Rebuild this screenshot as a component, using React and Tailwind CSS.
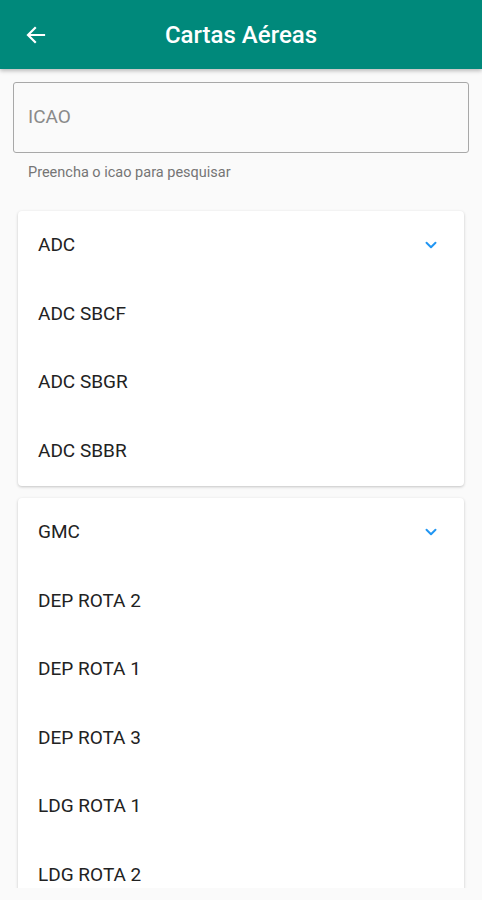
import React from "react";

const groups = [
  { title: "ADC", items: ["ADC SBCF", "ADC SBGR", "ADC SBBR"] },
  { title: "GMC", items: ["DEP ROTA 2", "DEP ROTA 1", "DEP ROTA 3", "LDG ROTA 1", "LDG ROTA 2"] },
];

function Chevron() {
  return (
    <svg width="18" height="18" viewBox="0 0 24 24" fill="none">
      <path d="M6 9l6 6 6-6" stroke="#2196f3" strokeWidth="2.6" strokeLinecap="round" strokeLinejoin="round" />
    </svg>
  );
}

export default function App() {
  return (
    <div className="h-[900px] bg-[#fafafa] overflow-hidden" style={{ fontFamily: "Roboto, 'Noto Sans', sans-serif" }}>
      <div className="h-[888px] overflow-hidden">
        {/* header */}
        <div className="relative h-[69px] bg-[#00897b] flex items-center justify-center shadow-[0_2px_4px_rgba(0,0,0,0.25)]">
          <svg className="absolute left-[24px] top-[23px]" width="24" height="24" viewBox="0 0 24 24" fill="none">
            <path d="M20 12H4.5M11 5l-7 7 7 7" stroke="white" strokeWidth="2.2" strokeLinecap="square" />
          </svg>
          <h1 className="text-white text-[24px] font-medium">Cartas Aéreas</h1>
        </div>

        {/* search */}
        <div className="px-[13px] pt-[13px]">
          <div className="h-[71px] border border-[#a8a8a8] rounded-[3px] flex items-center px-[14px]">
            <span className="text-[19px] text-[#8a8a8a]">ICAO</span>
          </div>
          <p className="text-[14.5px] text-[#757575] pl-[15px] pt-[9px]">Preencha o icao para pesquisar</p>
        </div>

        {/* groups */}
        <div className="px-[18px] pt-[27px] flex flex-col gap-[12px]">
          {groups.map((g) => (
            <div key={g.title} className="bg-white rounded-[4px] shadow-[0_1px_3px_rgba(0,0,0,0.22)]">
              <div className="h-[69px] flex items-center justify-between pl-[20px] pr-[24px]">
                <span className="text-[19px] text-[#222]">{g.title}</span>
                <Chevron />
              </div>
              {g.items.map((it) => (
                <div key={it} className="h-[68.6px] flex items-center pl-[20px]">
                  <span className="text-[19px] text-[#222]">{it}</span>
                </div>
              ))}
            </div>
          ))}
        </div>
      </div>
    </div>
  );
}
